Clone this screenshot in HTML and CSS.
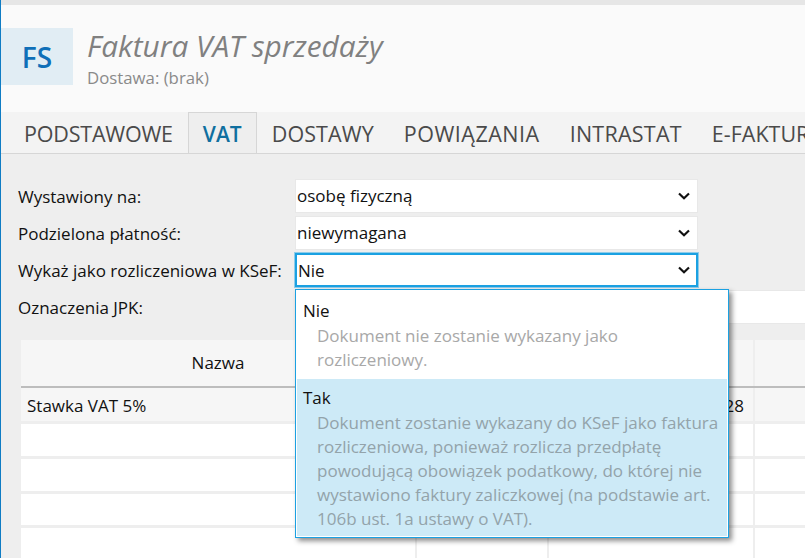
FILE: index.html
```html
<!DOCTYPE html>
<html lang="pl">
<head>
    <meta charset="UTF-8">
    <meta name="viewport" content="width=device-width, initial-scale=1.0">
    <title>Faktura VAT sprzedaży</title>
    <link rel="stylesheet" href="styles.css">
</head>
<body>
    <div class="topbar"></div>
    <header class="doc-header">
        <div class="doc-tile">FS</div>
        <div class="doc-titles">
            <h1>Faktura VAT sprzedaży</h1>
            <p>Dostawa: (brak)</p>
        </div>
    </header>
    <nav class="tabs">
        <div class="tab">PODSTAWOWE</div>
        <div class="tab active">VAT</div>
        <div class="tab">DOSTAWY</div>
        <div class="tab">POWIĄZANIA</div>
        <div class="tab">INTRASTAT</div>
        <div class="tab">E-FAKTURA</div>
    </nav>
    <main class="content">
        <div class="form-row">
            <label>Wystawiony na:</label>
            <div class="select">
                <span>osobę fizyczną</span>
                <svg class="chevron" viewBox="0 0 12 8"><path d="M1 1.5 L6 6.2 L11 1.5"/></svg>
            </div>
        </div>
        <div class="form-row">
            <label>Podzielona płatność:</label>
            <div class="select">
                <span>niewymagana</span>
                <svg class="chevron" viewBox="0 0 12 8"><path d="M1 1.5 L6 6.2 L11 1.5"/></svg>
            </div>
        </div>
        <div class="form-row">
            <label>Wykaż jako rozliczeniowa w KSeF:</label>
            <div class="select focused">
                <span>Nie</span>
                <svg class="chevron" viewBox="0 0 12 8"><path d="M1 1.5 L6 6.2 L11 1.5"/></svg>
            </div>
        </div>
        <div class="form-row">
            <label>Oznaczenia JPK:</label>
            <div class="select wide"></div>
        </div>

        <div class="grid">
            <div class="grid-row head">
                <div class="cell">Nazwa</div>
                <div class="cell"></div>
                <div class="cell"></div>
                <div class="cell"></div>
            </div>
            <div class="grid-row first">
                <div class="cell">Stawka VAT 5%</div>
                <div class="cell"></div>
                <div class="cell amount">28</div>
                <div class="cell"></div>
            </div>
            <div class="grid-row h1"><div class="cell"></div><div class="cell"></div><div class="cell"></div><div class="cell"></div></div>
            <div class="grid-row h2"><div class="cell"></div><div class="cell"></div><div class="cell"></div><div class="cell"></div></div>
            <div class="grid-row h3"><div class="cell"></div><div class="cell"></div><div class="cell"></div><div class="cell"></div></div>
            <div class="grid-row h4"><div class="cell"></div><div class="cell"></div><div class="cell"></div><div class="cell"></div></div>
        </div>

        <div class="dropdown">
            <div class="option">
                <div class="option-name">Nie</div>
                <div class="option-desc">Dokument nie zostanie wykazany jako rozliczeniowy.</div>
            </div>
            <div class="option selected">
                <div class="option-name">Tak</div>
                <div class="option-desc">Dokument zostanie wykazany do KSeF jako faktura rozliczeniowa, ponieważ rozlicza przedpłatę powodującą obowiązek podatkowy, do której nie wystawiono faktury zaliczkowej (na podstawie art. 106b ust. 1a ustawy o VAT).</div>
            </div>
        </div>
    </main>
</body>
</html>
```

FILE: styles.css
```css
html, body {
    height: 100%;
}
body {
    margin: 0;
    width: 805px;
    height: 558px;
    overflow: hidden;
    background-color: #eeeeee;
    color: #111;
    font-family: 'Open Sans', 'Noto Sans', sans-serif;
    font-size: 17px;
    border-left: 1px solid #0f7cc4;
    box-sizing: border-box;
}
.topbar {
    height: 5px;
    background-color: #e6e6e6;
}
.doc-header {
    display: flex;
    height: 107px;
    padding-top: 23px;
    box-sizing: border-box;
    background-color: #fafafa;
}
.doc-tile {
    width: 72px;
    height: 57px;
    background-color: #e1edf4;
    color: #0f6fb8;
    font-size: 28px;
    font-weight: 600;
    display: flex;
    align-items: center;
    justify-content: center;
}
.doc-titles {
    margin-left: 14px;
}
.doc-titles h1 {
    margin: 0;
    font-size: 29.8px;
    line-height: 36px;
    font-weight: 400;
    font-style: italic;
    color: #808080;
}
.doc-titles p {
    margin: 1px 0 0;
    font-size: 16.8px;
    line-height: 25px;
    color: #8a8a8a;
}
.tabs {
    display: flex;
    height: 42px;
    box-sizing: border-box;
    background-color: #f3f3f3;
    border-bottom: 1px solid #d6d6d6;
    overflow: hidden;
    padding-left: 8px;
}
.tab {
    padding: 0 15px;
    line-height: 44px;
    font-size: 21.5px;
    color: #4a4a4a;
    white-space: nowrap;
}
/* Segoe runs a bit different per word than the font used here */
.tab:nth-child(1) { letter-spacing: -0.2px; }
.tab:nth-child(3) { letter-spacing: 0.1px; }
.tab:nth-child(4) { letter-spacing: 0.5px; }
.tab:nth-child(5) { letter-spacing: 0.25px; }
.tab.active {
    height: 42px;
    box-sizing: border-box;
    padding: 0 14px;
    background-color: #eeeeee;
    border: 1px solid #d6d6d6;
    border-bottom: none;
    line-height: 42px;
    font-size: 21px;
    font-weight: 600;
    color: #0f6f9f;
}
.content {
    position: relative;
    padding: 25px 0 0 17px;
}
.form-row {
    display: flex;
    align-items: center;
    height: 34px;
    margin-bottom: 3px;
}
.form-row label {
    width: 277px;
    flex-shrink: 0;
    white-space: nowrap;
}
.select {
    width: 403px;
    height: 34px;
    box-sizing: border-box;
    padding: 0 7px 0 1px;
    background-color: #fff;
    border: 1px solid #e8e8e8;
    display: flex;
    align-items: center;
    justify-content: space-between;
}
.select span {
    position: relative;
    top: -1px;
}
.select.focused {
    border: 2px solid #1ba1e2;
    box-shadow: 0 0 0 1px rgba(27, 161, 226, 0.45);
    padding-left: 1px;
    padding-right: 6px;
}
.select.focused span {
    top: 0;
}
.select.wide {
    width: 520px;
    flex-shrink: 0;
}
.chevron {
    width: 12px;
    height: 8px;
    fill: none;
    stroke: #111;
    stroke-width: 2.2;
}
.grid {
    margin: 16px 0 0 3px;
}
.grid-row {
    display: grid;
    grid-template-columns: 394px 130px 204px 60px;
    column-gap: 2px;
    margin-bottom: 3px;
}
.cell {
    background-color: #fff;
    padding: 0 6px;
    white-space: nowrap;
}
.head {
    margin-bottom: 0;
    border-bottom: 2px solid #bdbdbd;
}
.head .cell {
    background-color: #f6f6f6;
    height: 46px;
    line-height: 45px;
    text-align: center;
}
.first .cell {
    background-color: #f6f6f6;
    height: 33px;
    line-height: 36px;
}
.first .amount {
    padding-right: 9px;
    text-align: right;
}
.h1 .cell { height: 32px; }
.h2 .cell { height: 32px; }
.h3 .cell { height: 31px; }
.h4 .cell { height: 40px; }
.dropdown {
    position: absolute;
    left: 294px;
    top: 135px;
    width: 434px;
    box-sizing: border-box;
    background-color: #fff;
    border: 1px solid #1ba1e2;
    box-shadow: 3px 3px 5px rgba(0, 0, 0, 0.45);
}
.option {
    padding: 8px 7px 7px;
}
.option.selected {
    background-color: #cdeaf7;
    margin: 0 1px 1px;
    padding: 6px 8px 5px 6px;
}
.option-name {
    line-height: 26px;
}
.option-desc {
    padding-left: 14px;
    line-height: 24px;
    color: #a8a8a8;
}
.selected .option-desc {
    color: #93a3aa;
}
```
